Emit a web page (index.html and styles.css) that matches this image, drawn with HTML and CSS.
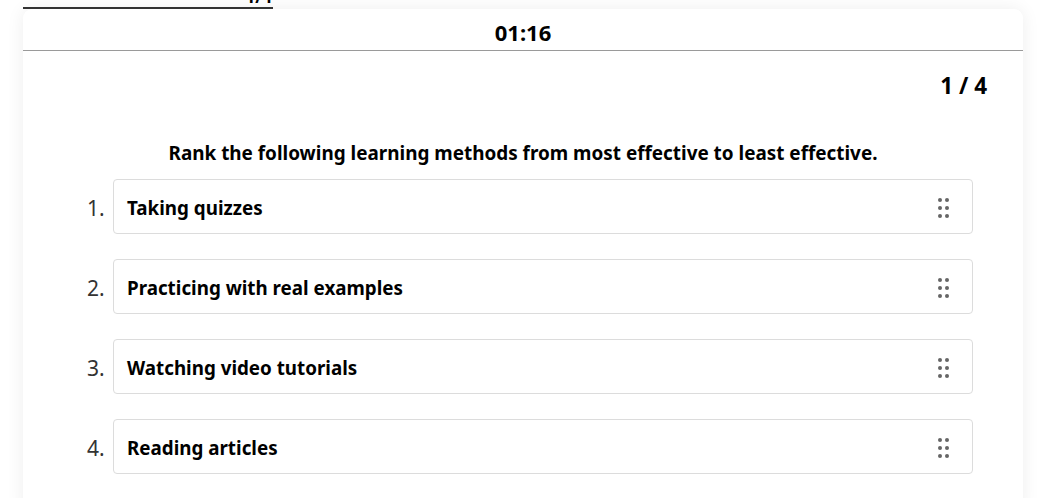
FILE: index.html
```html
<!DOCTYPE html>
<html lang="en">
<head>
<meta charset="utf-8">
<title>Ranking quiz</title>
<link rel="stylesheet" href="styles.css">
</head>
<body>
<div class="page">
  <div class="progress">
    <div class="progress-fill" style="width:25%"><span class="progress-label">1/4</span></div>
  </div>
  <section class="card">
    <header class="timer">01:16</header>
    <div class="counter">1 / 4</div>
    <h2 class="question">Rank the following learning methods from most effective to least effective.</h2>
    <ol class="rank-list">
      <li class="rank-row"><span class="rank-num">1.</span><div class="rank-item"><span class="rank-text">Taking quizzes</span><span class="handle"><i></i><i></i><i></i><i></i><i></i><i></i></span></div></li>
      <li class="rank-row"><span class="rank-num">2.</span><div class="rank-item"><span class="rank-text">Practicing with real examples</span><span class="handle"><i></i><i></i><i></i><i></i><i></i><i></i></span></div></li>
      <li class="rank-row"><span class="rank-num">3.</span><div class="rank-item"><span class="rank-text">Watching video tutorials</span><span class="handle"><i></i><i></i><i></i><i></i><i></i><i></i></span></div></li>
      <li class="rank-row"><span class="rank-num">4.</span><div class="rank-item"><span class="rank-text">Reading articles</span><span class="handle"><i></i><i></i><i></i><i></i><i></i><i></i></span></div></li>
    </ol>
  </section>
</div>
</body>
</html>
```

FILE: styles.css
```css
* { box-sizing: border-box; }
html, body { margin: 0; padding: 0; background: #fff; }
body {
  font-family: "Noto Sans", "Open Sans", sans-serif;
  color: #000;
  overflow: hidden;
}
.page {
  padding: 0 15px 0 23px;
  margin-top: -17px;
}
.progress {
  width: 1000px;
  height: 26px;
  display: flex;
  align-items: flex-end;
}
.progress-fill {
  height: 2px;
  background: #333;
  position: relative;
}
.progress-label {
  position: absolute;
  right: 1px;
  bottom: 3px;
  font-size: 17px;
  font-weight: 700;
  line-height: 18px;
}
.card {
  width: 1000px;
  background: #fff;
  border-radius: 9px;
  box-shadow: 0 0 18px rgba(0,0,0,0.07);
  padding-bottom: 40px;
}
.timer {
  height: 42px;
  border-bottom: 1px solid #9a9a9a;
  text-align: center;
  font-size: 22px;
  font-weight: 700;
  line-height: 28px;
  padding-top: 9px;
}
.counter {
  text-align: right;
  padding: 21px 36px 0 0;
  font-size: 22.5px;
  font-weight: 700;
  line-height: 28px;
}
.question {
  margin: 40px 0 0;
  text-align: center;
  font-size: 18.9px;
  font-weight: 700;
  line-height: 26px;
}
.rank-list {
  list-style: none;
  margin: 13px 0 0;
  padding: 0 50px 0 62px;
  display: flex;
  flex-direction: column;
  gap: 25px;
}
.rank-row {
  display: flex;
  align-items: center;
}
.rank-num {
  width: 28px;
  padding-left: 2px;
  font-size: 21px;
  color: #333;
  line-height: 28px;
  margin-top: 2px;
}
.rank-item {
  flex: 1;
  height: 55px;
  border: 1px solid #dcdcdc;
  border-radius: 4px;
  display: flex;
  align-items: center;
  justify-content: space-between;
  padding: 0 23px 0 13px;
}
.rank-text {
  font-size: 18.8px;
  font-weight: 700;
  line-height: 26px;
  margin-top: 2px;
}
.handle {
  display: grid;
  grid-template-columns: 4px 4px;
  column-gap: 3px;
  row-gap: 4px;
  margin-top: 2px;
}
.handle i {
  width: 4px;
  height: 4px;
  border-radius: 50%;
  background: #666;
}
```
